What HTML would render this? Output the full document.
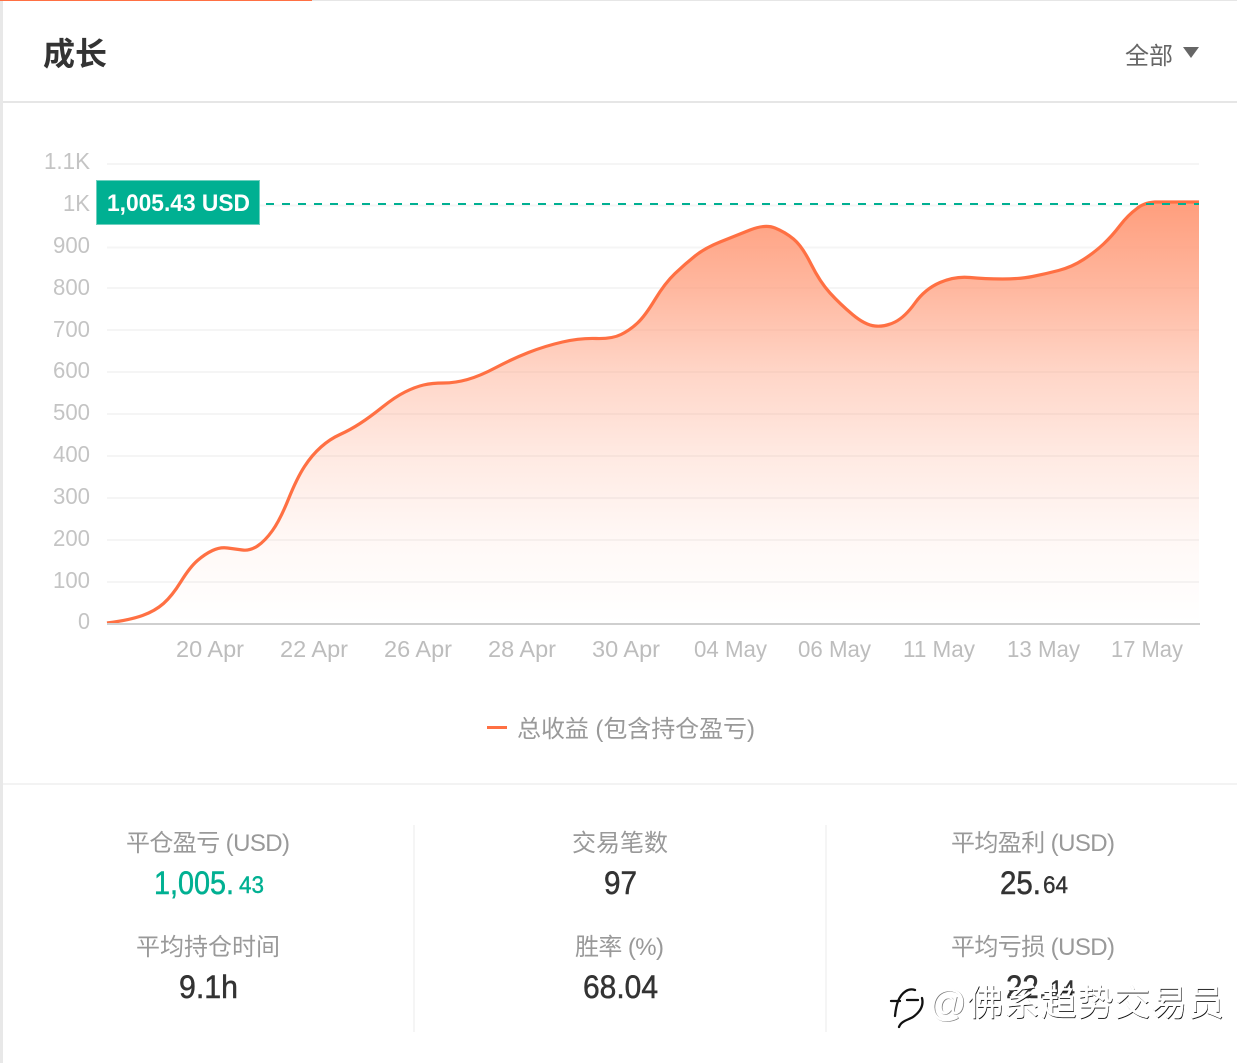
<!DOCTYPE html>
<html lang="zh">
<head>
<meta charset="utf-8">
<title>成长</title>
<style>
html,body{margin:0;padding:0;background:#fff;width:1237px;height:1063px;overflow:hidden}
svg{display:block}
text{font-family:"Liberation Sans","Noto Sans CJK SC",sans-serif}
.y{font-size:23px;fill:#c4c4c4;text-anchor:end}
.x{font-size:23px;fill:#bdbdbd}
.l{font-family:"Liberation Sans","Noto Sans CJK SC",sans-serif;font-size:24px;fill:#999}
.v{font-size:32px;fill:#333;stroke:#333;stroke-width:.5}
.d{font-size:24px;fill:#333;stroke:#333;stroke-width:.4}
.t{fill:#00b092;stroke:#00b092}
.g{stroke:#f5f5f5;stroke-width:2;fill:none}
.wm{font-family:"Liberation Sans","Noto Sans CJK SC",sans-serif;font-size:36px}
</style>
</head>
<body>
<svg width="1237" height="1063" viewBox="0 0 1237 1063" xmlns="http://www.w3.org/2000/svg">
<defs>
<linearGradient id="a" gradientUnits="userSpaceOnUse" x1="0" y1="202" x2="0" y2="623">
<stop offset="0" stop-color="#ff9e7d"/>
<stop offset=".204" stop-color="#ff9e7d" stop-opacity=".74"/>
<stop offset=".404" stop-color="#ff9e7d" stop-opacity=".43"/>
<stop offset=".603" stop-color="#ff9e7d" stop-opacity=".22"/>
<stop offset=".803" stop-color="#ff9e7d" stop-opacity=".07"/>
<stop offset="1" stop-color="#ff9e7d" stop-opacity="0"/>
</linearGradient>
</defs>
<rect width="1237" height="1063" fill="#fff"/>
<rect x="0" y="0" width="1237" height="1" fill="#e6e6e6"/>
<rect x="0" y="0" width="312" height="1" fill="#ff7043"/>
<rect x="0" y="1" width="3" height="1062" fill="#e8e8e8"/>
<rect x="3" y="101" width="1234" height="2" fill="#e6e6e6"/>
<rect x="3" y="783" width="1234" height="2" fill="#f3f3f3"/>
<rect x="413" y="825" width="2" height="207" fill="#f5f5f5"/>
<rect x="825" y="825" width="2" height="207" fill="#f5f5f5"/>

<text x="43" y="65" font-size="32" font-weight="700" fill="#333">成长</text>
<text x="1125" y="64" font-size="24" fill="#666">全部</text>
<path d="M1183 47H1199L1191 58Z" fill="#666"/>

<g class="g">
<path d="M107 164H1199"/>
<path d="M107 205.500H1199"/>
<path d="M107 247.500H1199"/>
<path d="M107 288H1199"/>
<path d="M107 330H1199"/>
<path d="M107 372H1199"/>
<path d="M107 414H1199"/>
<path d="M107 456H1199"/>
<path d="M107 498H1199"/>
<path d="M107 540H1199"/>
<path d="M107 582H1199"/>
</g>

<text class="y" x="90" y="169" textLength="46" lengthAdjust="spacingAndGlyphs">1.1K</text>
<text class="y" x="90" y="211" textLength="27" lengthAdjust="spacingAndGlyphs">1K</text>
<text class="y" x="90" y="253" textLength="37" lengthAdjust="spacingAndGlyphs">900</text>
<text class="y" x="90" y="295" textLength="37" lengthAdjust="spacingAndGlyphs">800</text>
<text class="y" x="90" y="337" textLength="37" lengthAdjust="spacingAndGlyphs">700</text>
<text class="y" x="90" y="378" textLength="37" lengthAdjust="spacingAndGlyphs">600</text>
<text class="y" x="90" y="420" textLength="37" lengthAdjust="spacingAndGlyphs">500</text>
<text class="y" x="90" y="462" textLength="37" lengthAdjust="spacingAndGlyphs">400</text>
<text class="y" x="90" y="504" textLength="37" lengthAdjust="spacingAndGlyphs">300</text>
<text class="y" x="90" y="546" textLength="37" lengthAdjust="spacingAndGlyphs">200</text>
<text class="y" x="90" y="588" textLength="37" lengthAdjust="spacingAndGlyphs">100</text>
<text class="y" x="90" y="629" textLength="12" lengthAdjust="spacingAndGlyphs">0</text>

<path fill="url(#a)" d="M107 623Q130 620 142.500 615.500Q155 611 163.500 603.500Q172 596 181 581.500Q190 567 197.500 560.500Q205 554 212.500 550.500Q220 547 227.500 548Q235 549 242.500 550Q250 551 257.500 546Q265 541 272.500 530.500Q280 520 288.500 499Q297 478 304.500 466.500Q312 455 321 447Q330 439 340 434.500Q350 430 360 423.500Q370 417 382.500 407Q395 397 405 392Q415 387 423.500 385Q432 383 443.500 383Q455 383 467.500 379.500Q480 376 496 367.500Q512 359 528.500 352.500Q545 346 562.500 342Q580 338 596 338.500Q612 339 621 334.500Q630 330 637.500 323Q645 316 655 299.500Q665 283 675 273.500Q685 264 695 256Q705 248 720 242Q735 236 750 230Q765 224 775 228Q785 232 793.500 239Q802 246 811 264Q820 282 830 293Q840 304 852.500 314.500Q865 325 875 326Q885 327 895 322Q905 317 915 303Q925 289 940 282.500Q955 276 970 277.500Q985 279 1002.500 279Q1020 279 1032.500 276.500Q1045 274 1058.500 270.500Q1072 267 1083.500 259.500Q1095 252 1103.500 244Q1112 236 1120 225.500Q1128 215 1137 208.500Q1143 203 1155 202H1199V623H107Z"/>
<path fill="none" stroke="#ff7043" stroke-width="3.200" stroke-linejoin="round" d="M107 623Q130 620 142.500 615.500Q155 611 163.500 603.500Q172 596 181 581.500Q190 567 197.500 560.500Q205 554 212.500 550.500Q220 547 227.500 548Q235 549 242.500 550Q250 551 257.500 546Q265 541 272.500 530.500Q280 520 288.500 499Q297 478 304.500 466.500Q312 455 321 447Q330 439 340 434.500Q350 430 360 423.500Q370 417 382.500 407Q395 397 405 392Q415 387 423.500 385Q432 383 443.500 383Q455 383 467.500 379.500Q480 376 496 367.500Q512 359 528.500 352.500Q545 346 562.500 342Q580 338 596 338.500Q612 339 621 334.500Q630 330 637.500 323Q645 316 655 299.500Q665 283 675 273.500Q685 264 695 256Q705 248 720 242Q735 236 750 230Q765 224 775 228Q785 232 793.500 239Q802 246 811 264Q820 282 830 293Q840 304 852.500 314.500Q865 325 875 326Q885 327 895 322Q905 317 915 303Q925 289 940 282.500Q955 276 970 277.500Q985 279 1002.500 279Q1020 279 1032.500 276.500Q1045 274 1058.500 270.500Q1072 267 1083.500 259.500Q1095 252 1103.500 244Q1112 236 1120 225.500Q1128 215 1137 208.500Q1143 203 1155 202H1199"/>

<rect x="107" y="623" width="1093" height="2" fill="#cfcfcf"/>

<path d="M266 204H1199" stroke="#00b092" stroke-width="2" stroke-dasharray="8 8" fill="none"/>
<rect x="96.500" y="180.500" width="163" height="44" fill="#00b092" stroke="#6fd0bf"/>
<text x="107" y="211" font-size="24" font-weight="700" fill="#fff" textLength="143" lengthAdjust="spacingAndGlyphs">1,005.43 USD</text>

<text class="x" x="176" y="657" textLength="68" lengthAdjust="spacingAndGlyphs">20 Apr</text>
<text class="x" x="280" y="657" textLength="68" lengthAdjust="spacingAndGlyphs">22 Apr</text>
<text class="x" x="384" y="657" textLength="68" lengthAdjust="spacingAndGlyphs">26 Apr</text>
<text class="x" x="488" y="657" textLength="68" lengthAdjust="spacingAndGlyphs">28 Apr</text>
<text class="x" x="592" y="657" textLength="68" lengthAdjust="spacingAndGlyphs">30 Apr</text>
<text class="x" x="694" y="657" textLength="73" lengthAdjust="spacingAndGlyphs">04 May</text>
<text class="x" x="798" y="657" textLength="73" lengthAdjust="spacingAndGlyphs">06 May</text>
<text class="x" x="903" y="657" textLength="72" lengthAdjust="spacingAndGlyphs">11 May</text>
<text class="x" x="1007" y="657" textLength="73" lengthAdjust="spacingAndGlyphs">13 May</text>
<text class="x" x="1111" y="657" textLength="72" lengthAdjust="spacingAndGlyphs">17 May</text>

<rect x="487" y="726" width="20" height="3" fill="#ff7043"/>
<text class="l" x="517" y="737" textLength="238">总收益 (包含持仓盈亏)</text>

<text class="l" x="126" y="851" textLength="164">平仓盈亏 (USD)</text>
<text class="v t" x="154" y="894" style="fill:#00b092;stroke:#00b092" textLength="80" lengthAdjust="spacingAndGlyphs">1,005.</text>
<text class="d t" x="239" y="893" style="fill:#00b092;stroke:#00b092" textLength="25" lengthAdjust="spacingAndGlyphs">43</text>
<text class="l" x="136" y="955">平均持仓时间</text>
<text class="v" x="179" y="998" textLength="59" lengthAdjust="spacingAndGlyphs">9.1h</text>

<text class="l" x="572" y="851">交易笔数</text>
<text class="v" x="604" y="894" textLength="33" lengthAdjust="spacingAndGlyphs">97</text>
<text class="l" x="575" y="955" textLength="89">胜率 (%)</text>
<text class="v" x="583" y="998" textLength="75" lengthAdjust="spacingAndGlyphs">68.04</text>

<text class="l" x="951" y="851" textLength="164">平均盈利 (USD)</text>
<text class="v" x="1000" y="894" textLength="41" lengthAdjust="spacingAndGlyphs">25.</text>
<text class="d" x="1043" y="893" textLength="25" lengthAdjust="spacingAndGlyphs">64</text>
<text class="l" x="951" y="955" textLength="164">平均亏损 (USD)</text>
<text class="v" x="1006" y="998" textLength="41" lengthAdjust="spacingAndGlyphs">22.</text>
<text class="d" x="1050" y="997" textLength="25" lengthAdjust="spacingAndGlyphs">14</text>

<g>
<text class="wm" x="967" y="1015" fill="#111" transform="translate(.7 .9)" textLength="257">佛系趋势交易员</text>
<text class="wm" x="967" y="1015" fill="#fff" stroke="#fff" stroke-width=".3" textLength="257">佛系趋势交易员</text>
<text x="929" y="1016" font-size="37" fill="#777" transform="translate(.7 .7)">@</text>
<text x="929" y="1016" font-size="37" fill="#fff">@</text>
<path d="M895 1016C896 1006 898 996 906 991C909 989 912 989 915 990M891 1001H900M907 1000H918M922 998C924 1006 920 1012 913 1017C908 1020 901 1021 899 1027" fill="none" stroke="#111" stroke-width="2.300" stroke-linecap="round"/>
</g>
</svg>
</body>
</html>
